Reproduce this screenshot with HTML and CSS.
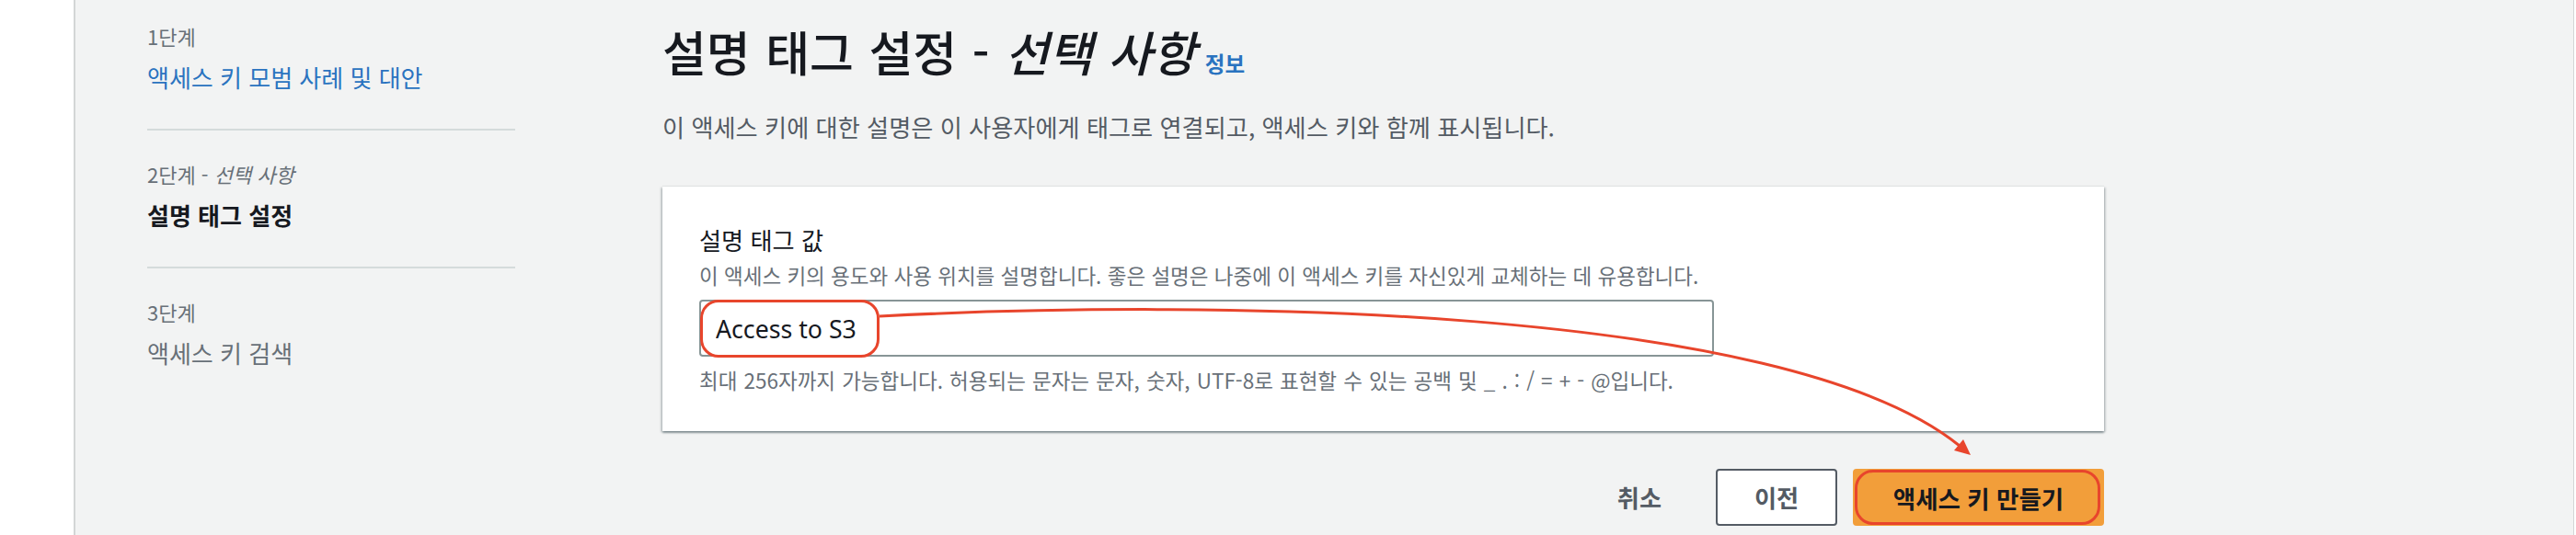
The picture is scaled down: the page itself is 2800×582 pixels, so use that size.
FILE: index.html
```html
<!DOCTYPE html>
<html lang="ko">
<head>
  <meta charset="UTF-8">
  <title>액세스 키 만들기</title>
  <link rel="stylesheet" href="styles.css">
</head>
<body>

  <div class="shell">
    <div class="edge edge-left"></div>

    <nav class="steps">
      <div class="step">
        <span class="step-label">1단계</span>
        <a class="step-title link" href="#">액세스 키 모범 사례 및 대안</a>
      </div>
      <hr class="step-divider">
      <div class="step">
        <span class="step-label">2단계 - <i>선택 사항</i></span>
        <span class="step-title current">설명 태그 설정</span>
      </div>
      <hr class="step-divider">
      <div class="step">
        <span class="step-label">3단계</span>
        <span class="step-title disabled">액세스 키 검색</span>
      </div>
    </nav>

    <main class="content">
      <h1>설명 태그 설정 - <i>선택 사항</i><a class="info" href="#">정보</a></h1>
      <p class="subtitle">이 액세스 키에 대한 설명은 이 사용자에게 태그로 연결되고, 액세스 키와 함께 표시됩니다.</p>

      <div class="card">
        <label class="field-label" for="tagValue">설명 태그 값</label>
        <p class="field-desc">이 액세스 키의 용도와 사용 위치를 설명합니다. 좋은 설명은 나중에 이 액세스 키를 자신있게 교체하는 데 유용합니다.</p>
        <div class="input-wrap">
          <input id="tagValue" type="text" value="Access to S3">
          <span class="mark mark-input"></span>
        </div>
        <p class="field-hint">최대 256자까지 가능합니다. 허용되는 문자는 문자, 숫자, UTF-8로 표현할 수 있는 공백 및 _ . : / = + - @입니다.</p>
      </div>

      <div class="actions">
        <button class="btn btn-link" type="button">취소</button>
        <button class="btn btn-normal" type="button">이전</button>
        <button class="btn btn-primary" type="button">액세스 키 만들기<span class="mark mark-btn"></span></button>
      </div>
    </main>

    <div class="edge edge-right"></div>

    <!-- annotation arrow: input value -> create button -->
    <svg class="arrow" width="2800" height="582" viewBox="0 0 2800 582">
      <path d="M956 344 C1300 326, 1940 330, 2130 485" fill="none" stroke="#e8452c" stroke-width="3"/>
      <polygon points="2142,495 2124,490 2134,478" fill="#e8452c"/>
    </svg>
  </div>

</body>
</html>
```

FILE: styles.css
```css
:root {
  --bg: #f2f3f3;
  --text: #16191f;
  --grey: #545b64;
  --muted: #687078;
  --link: #2a73c0;
  --divider: #d5dbdb;
  --mark: #e8452c;
  --primary: #f29e3a;
}

body {
  margin: 0;
  background: var(--bg);
  color: var(--text);
  font-family: "Noto Sans CJK KR", "Noto Sans", sans-serif;
}

.shell {
  position: relative;
  display: flex;
  height: 582px;
  overflow: hidden;
}

.edge {
  flex: none;
  background: #fff;
}

.edge-left {
  width: 80px;
  border-right: 2px solid #d3d6d6;
}

.edge-right {
  width: 2px;
  margin-left: auto;
  border-left: 1px solid #d3d6d6;
}

/* wizard steps */
.steps {
  flex: none;
  width: 400px;
  margin-left: 78px;
  padding-top: 24px;
  display: flex;
  flex-direction: column;
}

.step {
  display: flex;
  flex-direction: column;
  gap: 13px;
}

.step-label {
  font-size: 22px;
  line-height: 30px;
  color: var(--muted);
}

.step-title {
  font-size: 26px;
  line-height: 34px;
  text-decoration: none;
}

.step-title.link {
  color: var(--link);
}

.step-title.current {
  font-weight: bold;
  color: var(--text);
}

.step-title.disabled {
  color: var(--muted);
}

.step-divider {
  border: 0;
  height: 2px;
  margin: 39px 0 32px;
  background: var(--divider);
}

/* main column */
.content {
  flex: none;
  width: 1567px;
  margin-left: 160px;
  padding-top: 26px;
}

h1 {
  margin: 0;
  font-size: 52px;
  line-height: 60px;
  font-weight: 500;
  word-spacing: 2px;
}

.info {
  margin-left: 10px;
  font-size: 23.5px;
  font-weight: bold;
  color: var(--link);
  text-decoration: none;
  vertical-align: -1px;
  word-spacing: 0;
}

.subtitle {
  margin: 22px 0 0;
  font-size: 26.2px;
  line-height: 34px;
  color: var(--grey);
}

.card {
  margin-top: 48px;
  padding: 42px 40px 42px;
  background: #fff;
  box-shadow: 0 2px 2px rgba(0, 28, 36, 0.35),
              2px 1px 2px rgba(0, 28, 36, 0.15),
              -2px 1px 2px rgba(0, 28, 36, 0.15),
              0 -1px 1px rgba(0, 28, 36, 0.06);
}

.field-label {
  display: block;
  font-size: 26.2px;
  line-height: 32px;
}

.field-desc,
.field-hint {
  font-size: 22.5px;
  line-height: 28px;
  color: var(--muted);
}

.field-desc {
  margin: 8px 0 0;
}

.field-hint {
  margin: 11px 0 0;
  word-spacing: 0.8px;
}

.input-wrap {
  position: relative;
  width: 1103px;
  margin-top: 13px;
}

.input-wrap input {
  display: block;
  box-sizing: border-box;
  width: 100%;
  height: 62px;
  padding: 0 16px;
  border: 2px solid #879596;
  border-radius: 4px;
  background: #fff;
  font-family: "Noto Sans", sans-serif;
  font-size: 26.7px;
  color: var(--text);
  outline: none;
}

/* red annotation outlines */
.mark {
  position: absolute;
  box-sizing: border-box;
  border: 3px solid var(--mark);
  border-radius: 20px;
  pointer-events: none;
}

.mark-input {
  left: 1px;
  top: 0;
  width: 195px;
  height: 63px;
}

.mark-btn {
  left: 2px;
  top: 1px;
  right: 4px;
  bottom: 1px;
}

.actions {
  display: flex;
  justify-content: flex-end;
  align-items: center;
  gap: 17px;
  margin-top: 41px;
}

.btn {
  height: 62px;
  border-radius: 4px;
  font-family: inherit;
  font-size: 26.2px;
  font-weight: bold;
  cursor: pointer;
}

.btn-link {
  padding: 0 20px;
  margin-right: 22px;
  border: 0;
  background: none;
  color: var(--grey);
}

.btn-normal {
  width: 132px;
  border: 2px solid var(--grey);
  background: #fff;
  color: var(--grey);
}

.btn-primary {
  position: relative;
  width: 273px;
  border: 0;
  background: var(--primary);
  color: var(--text);
  font-size: 26.5px;
}

.arrow {
  position: absolute;
  left: 0;
  top: 0;
  pointer-events: none;
}
```
